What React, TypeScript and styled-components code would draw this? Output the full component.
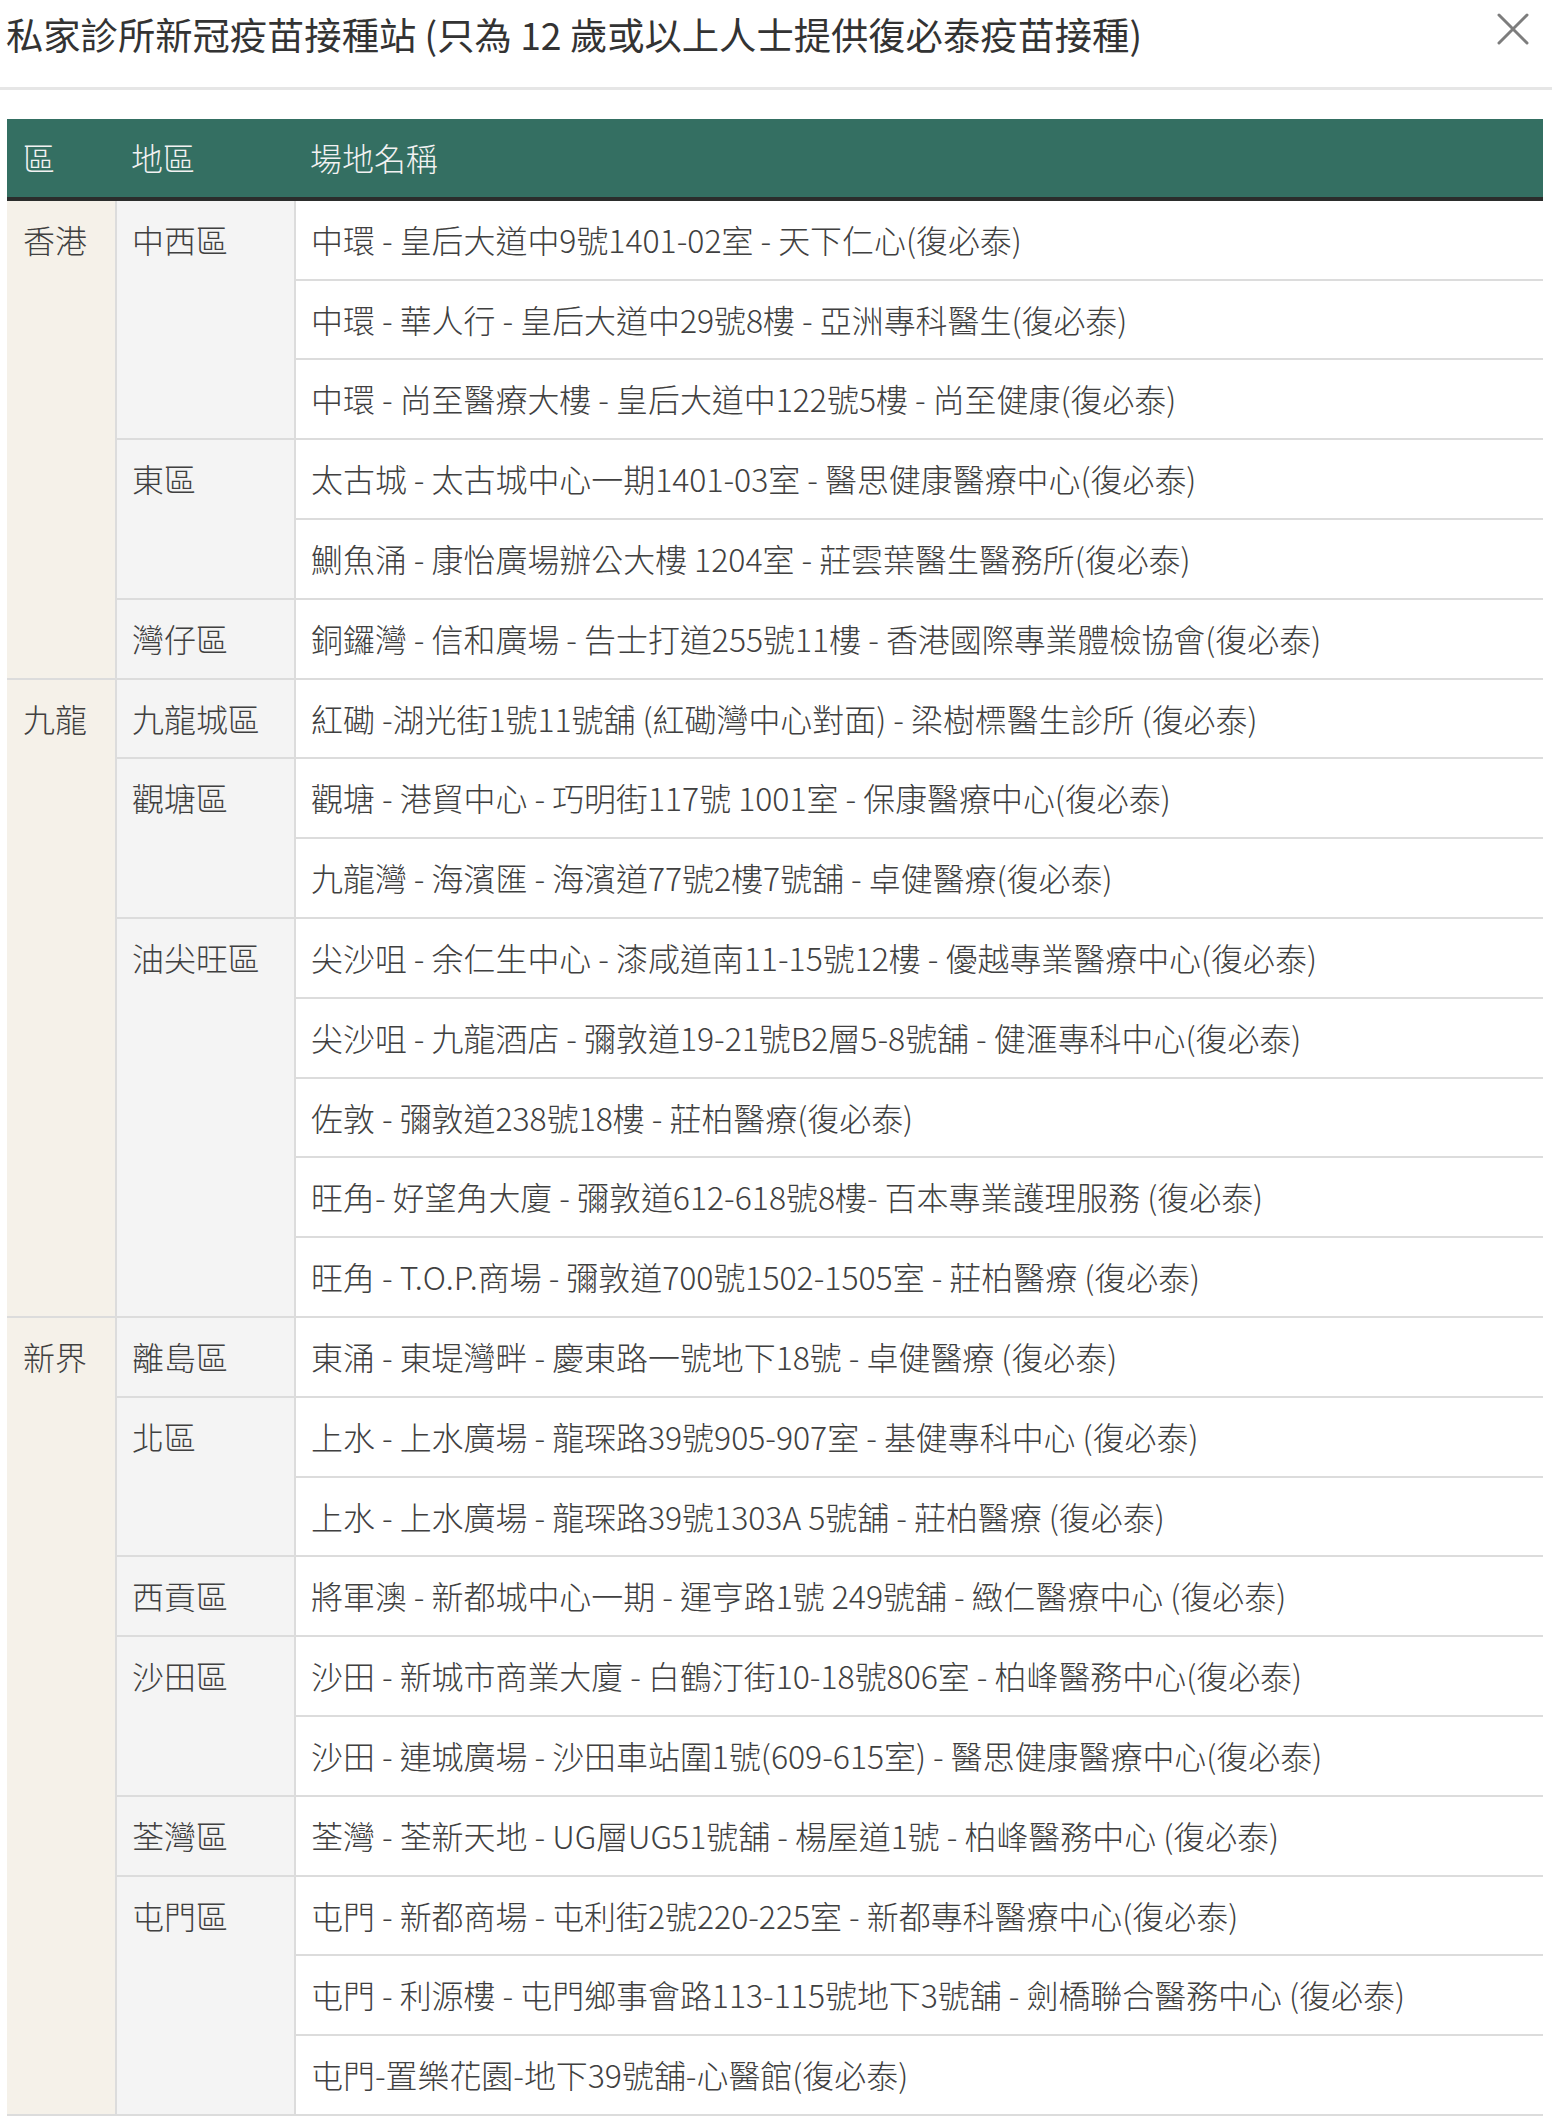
import styled, { createGlobalStyle } from 'styled-components';

const GlobalStyle = createGlobalStyle`
  html, body {
    margin: 0;
    padding: 0;
    background: #ffffff;
  }
  body {
    font-family: 'Noto Sans CJK TC', 'Noto Sans', sans-serif;
    color: #404040;
  }
`;

type Group = {
  region: string;
  districts: { name: string; venues: string[] }[];
};

const data: Group[] = [
  {
    region: '香港',
    districts: [
      {
        name: '中西區',
        venues: [
          '中環 - 皇后大道中9號1401-02室 - 天下仁心(復必泰)',
          '中環 - 華人行 - 皇后大道中29號8樓 - 亞洲專科醫生(復必泰)',
          '中環 - 尚至醫療大樓 - 皇后大道中122號5樓 - 尚至健康(復必泰)',
        ],
      },
      {
        name: '東區',
        venues: [
          '太古城 - 太古城中心一期1401-03室 - 醫思健康醫療中心(復必泰)',
          '鰂魚涌 - 康怡廣場辦公大樓 1204室 - 莊雲葉醫生醫務所(復必泰)',
        ],
      },
      {
        name: '灣仔區',
        venues: ['銅鑼灣 - 信和廣場 - 告士打道255號11樓 - 香港國際專業體檢協會(復必泰)'],
      },
    ],
  },
  {
    region: '九龍',
    districts: [
      {
        name: '九龍城區',
        venues: ['紅磡 -湖光街1號11號舖 (紅磡灣中心對面) - 梁樹標醫生診所 (復必泰)'],
      },
      {
        name: '觀塘區',
        venues: [
          '觀塘 - 港貿中心 - 巧明街117號 1001室 - 保康醫療中心(復必泰)',
          '九龍灣 - 海濱匯 - 海濱道77號2樓7號舖 - 卓健醫療(復必泰)',
        ],
      },
      {
        name: '油尖旺區',
        venues: [
          '尖沙咀 - 余仁生中心 - 漆咸道南11-15號12樓 - 優越專業醫療中心(復必泰)',
          '尖沙咀 - 九龍酒店 - 彌敦道19-21號B2層5-8號舖 - 健滙專科中心(復必泰)',
          '佐敦 - 彌敦道238號18樓 - 莊柏醫療(復必泰)',
          '旺角- 好望角大廈 - 彌敦道612-618號8樓- 百本專業護理服務 (復必泰)',
          '旺角 - T.O.P.商場 - 彌敦道700號1502-1505室 - 莊柏醫療 (復必泰)',
        ],
      },
    ],
  },
  {
    region: '新界',
    districts: [
      {
        name: '離島區',
        venues: ['東涌 - 東堤灣畔 - 慶東路一號地下18號 - 卓健醫療 (復必泰)'],
      },
      {
        name: '北區',
        venues: [
          '上水 - 上水廣場 - 龍琛路39號905-907室 - 基健專科中心 (復必泰)',
          '上水 - 上水廣場 - 龍琛路39號1303A 5號舖 - 莊柏醫療 (復必泰)',
        ],
      },
      {
        name: '西貢區',
        venues: ['將軍澳 - 新都城中心一期 - 運亨路1號 249號舖 - 緻仁醫療中心 (復必泰)'],
      },
      {
        name: '沙田區',
        venues: [
          '沙田 - 新城市商業大廈 - 白鶴汀街10-18號806室 - 柏峰醫務中心(復必泰)',
          '沙田 - 連城廣場 - 沙田車站圍1號(609-615室) - 醫思健康醫療中心(復必泰)',
        ],
      },
      {
        name: '荃灣區',
        venues: ['荃灣 - 荃新天地 - UG層UG51號舖 - 楊屋道1號 - 柏峰醫務中心 (復必泰)'],
      },
      {
        name: '屯門區',
        venues: [
          '屯門 - 新都商場 - 屯利街2號220-225室 - 新都專科醫療中心(復必泰)',
          '屯門 - 利源樓 - 屯門鄉事會路113-115號地下3號舖 - 劍橋聯合醫務中心 (復必泰)',
          '屯門-置樂花園-地下39號舖-心醫館(復必泰)',
        ],
      },
    ],
  },
];

const Modal = styled.div`
  width: 1552px;
  background: #fff;
`;

const TitleBar = styled.div`
  display: flex;
  justify-content: space-between;
  align-items: flex-start;
  height: 90px;
  padding: 8px 22px 0 6px;
  box-sizing: border-box;
  border-bottom: 3px solid #e6e6e6;
`;

const Title = styled.h1`
  margin: 0;
  font-size: 37.3px;
  line-height: 53px;
  font-weight: 400;
  color: #333;
`;

const CloseButton = styled.button`
  margin-top: 4px;
  width: 34px;
  height: 34px;
  padding: 0;
  border: none;
  background: none;
  cursor: pointer;
  display: flex;
  align-items: center;
  justify-content: center;
`;

const Body = styled.div`
  padding: 29px 9px 0 7px;
`;

const Table = styled.table`
  width: 100%;
  border-collapse: separate;
  border-spacing: 0;
  table-layout: fixed;
  font-size: 31.95px;
  line-height: 45.8px;
`;

const HeadCell = styled.th<{ $w?: number }>`
  width: ${p => (p.$w ? `${p.$w}px` : 'auto')};
  box-sizing: border-box;
  background: #346f62;
  color: #f2f2f2;
  font-weight: 300;
  text-align: left;
  padding: 16px 15px 16px 16px;
  border-bottom: 4px solid #2b2d2c;
  white-space: nowrap;
`;

const Cell = styled.td`
  vertical-align: top;
  text-align: left;
  padding: 16px 15px 16px 15px;
  border-bottom: 2px solid #dcdcdc;
  white-space: nowrap;
  font-weight: 300;
`;

const RegionCell = styled(Cell)`
  background: #f5f1e9;
  padding-left: 16px;
`;

const DistrictCell = styled(Cell)`
  background: #f4f4f4;
  border-left: 2px solid #dcdcdc;
`;

const VenueCell = styled(Cell)`
  background: #fff;
  border-left: 2px solid #dcdcdc;
`;

const CloseIcon = () => (
  <svg width="32" height="32" viewBox="0 0 32 32">
    <path d="M2 2 L30 30 M30 2 L2 30" stroke="#7d7d7d" strokeWidth="3" strokeLinecap="round" />
  </svg>
);

export default function App() {
  const rows: React.ReactNode[] = [];
  data.forEach(group => {
    const regionSpan = group.districts.reduce((n, d) => n + d.venues.length, 0);
    group.districts.forEach((district, di) => {
      district.venues.forEach((venue, vi) => {
        rows.push(
          <tr key={`${group.region}-${district.name}-${vi}`}>
            {di === 0 && vi === 0 && <RegionCell rowSpan={regionSpan}>{group.region}</RegionCell>}
            {vi === 0 && (
              <DistrictCell rowSpan={district.venues.length}>{district.name}</DistrictCell>
            )}
            <VenueCell>{venue}</VenueCell>
          </tr>,
        );
      });
    });
  });

  return (
    <>
      <GlobalStyle />
      <Modal>
        <TitleBar>
          <Title>私家診所新冠疫苗接種站 (只為 12 歲或以上人士提供復必泰疫苗接種)</Title>
          <CloseButton aria-label="close">
            <CloseIcon />
          </CloseButton>
        </TitleBar>
        <Body>
          <Table>
            <thead>
              <tr>
                <HeadCell $w={108}>區</HeadCell>
                <HeadCell $w={179}>地區</HeadCell>
                <HeadCell>場地名稱</HeadCell>
              </tr>
            </thead>
            <tbody>{rows}</tbody>
          </Table>
        </Body>
      </Modal>
    </>
  );
}
